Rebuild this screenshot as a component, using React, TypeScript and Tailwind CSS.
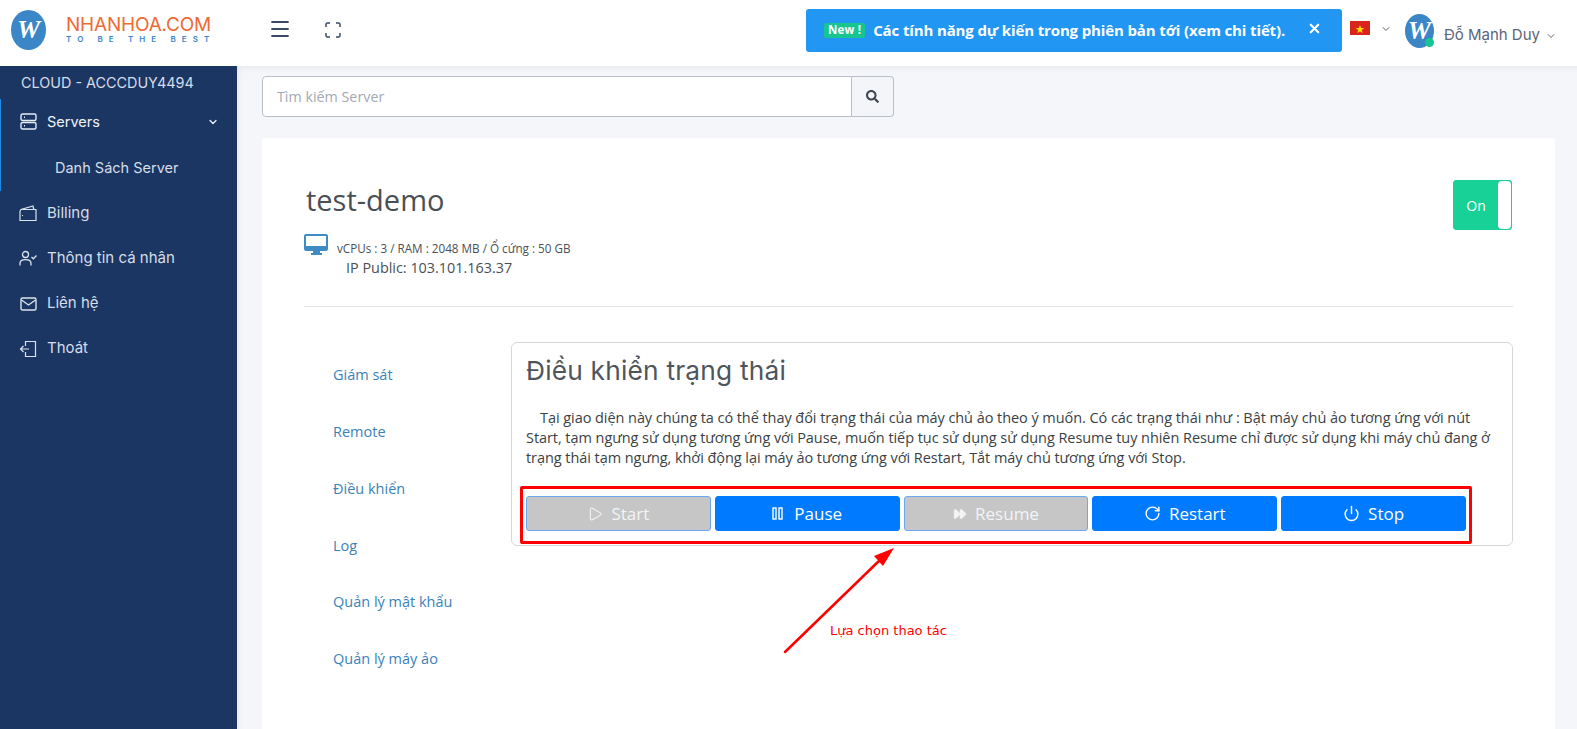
import { ChevronDown, X, Play, RotateCw, Power, FastForward, Menu } from "lucide-react";
import { FaSearch } from "react-icons/fa";

const body = "font-['Open_Sans','Noto_Sans',sans-serif]";
const side = "font-['Inter','Noto_Sans',sans-serif]";

function LogoW({ size }: { size: string }) {
  return (
    <div className={`${size} rounded-[50%] bg-[#3b86c6] flex items-center justify-center shrink-0`}>
      <span className="font-['Liberation_Serif',serif] italic font-bold text-white text-[26px] leading-none">W</span>
    </div>
  );
}

function ServerIcon() {
  return (
    <svg width="17" height="17" viewBox="0 0 17 17" fill="none" stroke="#e6edf5" strokeWidth="1.4">
      <rect x="1" y="1" width="15" height="6.5" rx="1.5" />
      <rect x="1" y="9.5" width="15" height="6.5" rx="1.5" />
      <path d="M4 4.2h1M4 12.8h1" />
    </svg>
  );
}

function WalletIcon() {
  return (
    <svg width="18" height="17" viewBox="0 0 18 17" fill="none" stroke="#dbe3ec" strokeWidth="1.2">
      <path d="M1 6v9.5h16V4.5H1.5M1 6l1-1.5 12-3.5.8 3.5" />
      <path d="M3 10.5h1" />
    </svg>
  );
}

function UserCheckIcon() {
  return (
    <svg width="18" height="17" viewBox="0 0 18 17" fill="none" stroke="#dbe3ec" strokeWidth="1.3">
      <circle cx="6.5" cy="4.5" r="3" />
      <path d="M1 15.5v-2c0-2.500 2-3.800 5.500-3.800s5.500 1.300 5.500 3.800v2M12.500 7l1.800 1.800L17.500 5.500" />
    </svg>
  );
}

function MailIcon() {
  return (
    <svg width="17" height="16" viewBox="0 0 17 16" fill="none" stroke="#dbe3ec" strokeWidth="1.4">
      <rect x="1" y="2" width="15" height="12" rx="1.5" />
      <path d="M1.500 4l7 5 7-5" />
    </svg>
  );
}

function LogoutIcon() {
  return (
    <svg width="18" height="18" viewBox="0 0 18 18" fill="none" stroke="#dbe3ec" strokeWidth="1.2">
      <path d="M6.500 6V1.500h10v15h-10V12M10 9H1.500M4.500 6L1.500 9l3 3" />
    </svg>
  );
}

function NavItem({ icon, label }: { icon: React.ReactNode; label: string }) {
  return (
    <div className="h-[45px] flex items-center pl-[19px] gap-[10px] text-[15px] text-[#d5dde7]">
      <span className="w-[18px] flex justify-center">{icon}</span>
      <span>{label}</span>
    </div>
  );
}

function Sidebar() {
  return (
    <aside className={`w-[237px] shrink-0 bg-[#1c3664] ${side}`}>
      <div className="h-[33px] pl-[21px] flex items-center text-[14.4px] text-[#d5dde7]">CLOUD - ACCCDUY4494</div>
      <div className="border-l border-[#1e88e5]">
        <div className="h-[45px] flex items-center pl-[18px] pr-[18px] gap-[10px] text-[14.5px] text-[#eef3f8]">
          <span className="w-[18px] flex justify-center"><ServerIcon /></span>
          <span className="flex-1">Servers</span>
          <ChevronDown size={12} strokeWidth={2.5} />
        </div>
        <div className="h-[47px] flex items-center pl-[54px] text-[14.5px] text-[#d5dde7]">Danh Sách Server</div>
      </div>
      <NavItem icon={<WalletIcon />} label="Billing" />
      <NavItem icon={<UserCheckIcon />} label="Thông tin cá nhân" />
      <NavItem icon={<MailIcon />} label="Liên hệ" />
      <NavItem icon={<LogoutIcon />} label="Thoát" />
    </aside>
  );
}

function Header() {
  return (
    <header className="h-[66px] bg-white flex items-center relative z-10">
      <div className="w-[237px] shrink-0 flex items-center pl-[11px] -mt-[6px]">
        <LogoW size="w-[35px] h-[40px]" />
        <div className="ml-[20px]">
          <div className={`${side} text-[19px] leading-[18px] text-[#ee6a34] tracking-[-0.2px]`}>NHANHOA.COM</div>
          <div className={`${side} text-[8px] font-semibold leading-[11px] text-[#3b86c6] tracking-[6.1px] whitespace-nowrap`}>TO BE THE BEST</div>
        </div>
      </div>
      <Menu size={24} strokeWidth={1.8} className="ml-[31px] -mt-[8px] text-[#3a4a63]" />
      <svg width="16" height="16" viewBox="0 0 16 16" fill="none" stroke="#3a4a63" strokeWidth="1.5" className="ml-[33px] -mt-[6px]">
        <path d="M1 5V2.500A1.500 1.500 0 0 1 2.500 1H5M11 1h2.500A1.500 1.500 0 0 1 15 2.500V5M15 11v2.500a1.500 1.500 0 0 1-1.500 1.500H11M5 15H2.500A1.500 1.500 0 0 1 1 13.500V11" />
      </svg>
      <div className="ml-auto flex items-center">
        <div className={`w-[536px] h-[43px] -mt-[6px] rounded-[3px] bg-[#2196f3] flex items-center pl-[18px] pr-[20px] text-white ${body}`}>
          <span className="bg-[#17c58f] rounded-[2px] px-[4px] h-[15px] flex items-center text-[11.500px] font-bold whitespace-nowrap tracking-[0.2px]">New !</span>
          <span className="ml-[8px] mt-[1px] text-[15px] font-bold whitespace-nowrap tracking-[-0.13px]">Các tính năng dự kiến trong phiên bản tới (xem chi tiết).</span>
          <X size={15} strokeWidth={3.5} className="ml-auto -mt-[3px]" />
        </div>
        <div className="w-[20px] h-[14px] ml-[8px] -mt-[10px] bg-[#da251d] flex items-center justify-center text-[#ffde00] text-[11px] leading-none">★</div>
        <ChevronDown size={12} className="ml-[10px] -mt-[8px] text-[#5b6678]" />
        <div className="relative ml-[13px] -mt-[4px]">
          <LogoW size="w-[29px] h-[34px]" />
          <span className="absolute right-0 bottom-[1px] w-[9px] h-[9px] rounded-full bg-[#17c58f]" />
        </div>
        <span className={`ml-[10px] mt-[5px] text-[15px] text-[#5b6678] ${side}`}>Đỗ Mạnh Duy</span>
        <ChevronDown size={12} className="ml-[5px] mt-[5px] mr-[20px] text-[#5b6678]" />
      </div>
    </header>
  );
}

function ActionButton({ icon, label, disabled }: { icon: React.ReactNode; label: string; disabled?: boolean }) {
  return (
    <button
      className={`flex-1 h-[35px] rounded-[3px] border flex items-center justify-center gap-[8px] text-[17px] ${
        disabled ? "bg-[#c6c6c6] border-[#6aa9ef] text-[#f2f4f6]" : "bg-[#007bff] border-[#007bff] text-white"
      }`}
    >
      {icon}
      {label}
    </button>
  );
}

const tabs = ["Giám sát", "Remote", "Điều khiển", "Log", "Quản lý mật khẩu", "Quản lý máy ảo"];

export default function App() {
  return (
    <div className={`h-[729px] w-[1577px] overflow-hidden flex flex-col bg-[#f4f6fa] ${body}`}>
      <Header />
      <div className="flex flex-1 min-h-0">
        <Sidebar />
        <main className="flex-1 pl-[25px] pr-[22px] pt-[10px] shadow-[inset_6px_6px_8px_-6px_rgba(0,0,0,0.08)]">
          <div className="flex w-[632px] h-[41px]">
            <div className="flex-1 border border-[#b9c0ca] rounded-l-[4px] bg-white flex items-center pl-[14px] text-[14.3px] text-[#a3a9b3]">Tìm kiếm Server</div>
            <div className="w-[42px] border border-l-0 border-[#b9c0ca] rounded-r-[4px] bg-[#f4f5f8] flex items-center justify-center">
              <FaSearch size={13} className="text-[#3d4550]" />
            </div>
          </div>

          <section className="relative mt-[21px] h-[600px] bg-white rounded-[3px] px-[42px] pt-[42px]">
            <div className="flex justify-between border-b border-[#e3e5e8] h-[127px]">
              <div>
                <h1 className="text-[29px] leading-[40px] ml-[2px] text-[#4a4f55]">test-demo</h1>
                <div className="flex mt-[14px]">
                  <svg width="24" height="21" viewBox="0 0 24 21" fill="#3f8cc4" className="shrink-0">
                    <path d="M2 0h20a2 2 0 0 1 2 2v13a2 2 0 0 1-2 2h-6v2h2v2H7v-2h2v-2H2a2 2 0 0 1-2-2V2a2 2 0 0 1 2-2zm0 2v10h20V2z" />
                  </svg>
                  <div className="ml-[9px] mt-[7px] text-[11.7px] leading-[15px] text-[#4a4f55] whitespace-nowrap">vCPUs : 3 / RAM : 2048 MB / Ổ cứng : 50 GB</div>
                </div>
                <div className="ml-[42px] mt-[2px] text-[14.4px] leading-[19px] text-[#4a4f55]">IP Public: 103.101.163.37</div>
              </div>
              <div className="w-[59px] h-[50px] mr-[1px] rounded-[3px] bg-[#17d196] border border-[#17d196] flex">
                <span className="flex-1 flex items-center justify-center text-[14px] text-white">On</span>
                <span className="w-[13px] bg-white rounded-[4px]" />
              </div>
            </div>

            <div className="flex mt-[35px]">
              <nav className="w-[207px] shrink-0 mt-[5px] pl-[29px]">
                {tabs.map((t) => (
                  <div key={t} className="h-[56.700px] flex items-center text-[14.5px] text-[#3b82b8]">{t}</div>
                ))}
              </nav>
              <div className="flex-1 h-[204px] border border-[#d4d7db] rounded-[6px] px-[14px]">
                <h2 className={`${side} text-[26.300px] leading-[56px] text-[#4f555c] tracking-[0.2px]`}>Điều khiển trạng thái</h2>
                <p className="mt-[9px] text-[14.5px] leading-[20px] text-[#3a3f45] indent-[14px] tracking-[-0.06px]">
                  Tại giao diện này chúng ta có thể thay đổi trạng thái của máy chủ ảo theo ý muốn. Có các trạng thái như : Bật máy chủ ảo tương ứng với nút Start, tạm ngưng sử dụng tương ứng với Pause, muốn tiếp tục sử dụng sử dụng Resume tuy nhiên Resume chỉ được sử dụng khi máy chủ đang ở trạng thái tạm ngưng, khởi động lại máy ảo tương ứng với Restart, Tắt máy chủ tương ứng với Stop.
                </p>
                <div className="flex gap-[4px] mt-[28px] w-[940px]">
                  <ActionButton disabled label="Start" icon={<Play size={16} strokeWidth={1.6} />} />
                  <ActionButton label="Pause" icon={
                    <svg width="11" height="13" viewBox="0 0 11 13" fill="none" stroke="white" strokeWidth="1.4" className="mr-[3px]">
                      <rect x="1" y="1" width="3" height="11" />
                      <rect x="7" y="1" width="3" height="11" />
                    </svg>
                  } />
                  <ActionButton disabled label="Resume" icon={<FastForward size={14} fill="currentColor" strokeWidth={1} />} />
                  <ActionButton label="Restart" icon={<RotateCw size={17} strokeWidth={2} />} />
                  <ActionButton label="Stop" icon={<Power size={17} strokeWidth={2} />} />
                </div>
              </div>
            </div>

            {/* annotation layer */}
            <div className="absolute left-[258px] top-[348px] w-[952px] h-[58px] border-[3px] border-[#ff0000] rounded-[2px]" />
            <svg className="absolute left-[520px] top-[408px]" width="120" height="112" viewBox="0 0 120 112" fill="none">
              <path d="M3 106L100 12" stroke="#ff0000" strokeWidth="2.5" strokeLinecap="round" />
              <path d="M112 2L92 10l9 10z" fill="#ff0000" />
            </svg>
            <div className="absolute left-[568px] top-[485px] text-[13px] leading-[16px] text-[#ff0000] font-['DejaVu_Sans',sans-serif]">Lựa chọn thao tác</div>
          </section>
        </main>
      </div>
    </div>
  );
}
